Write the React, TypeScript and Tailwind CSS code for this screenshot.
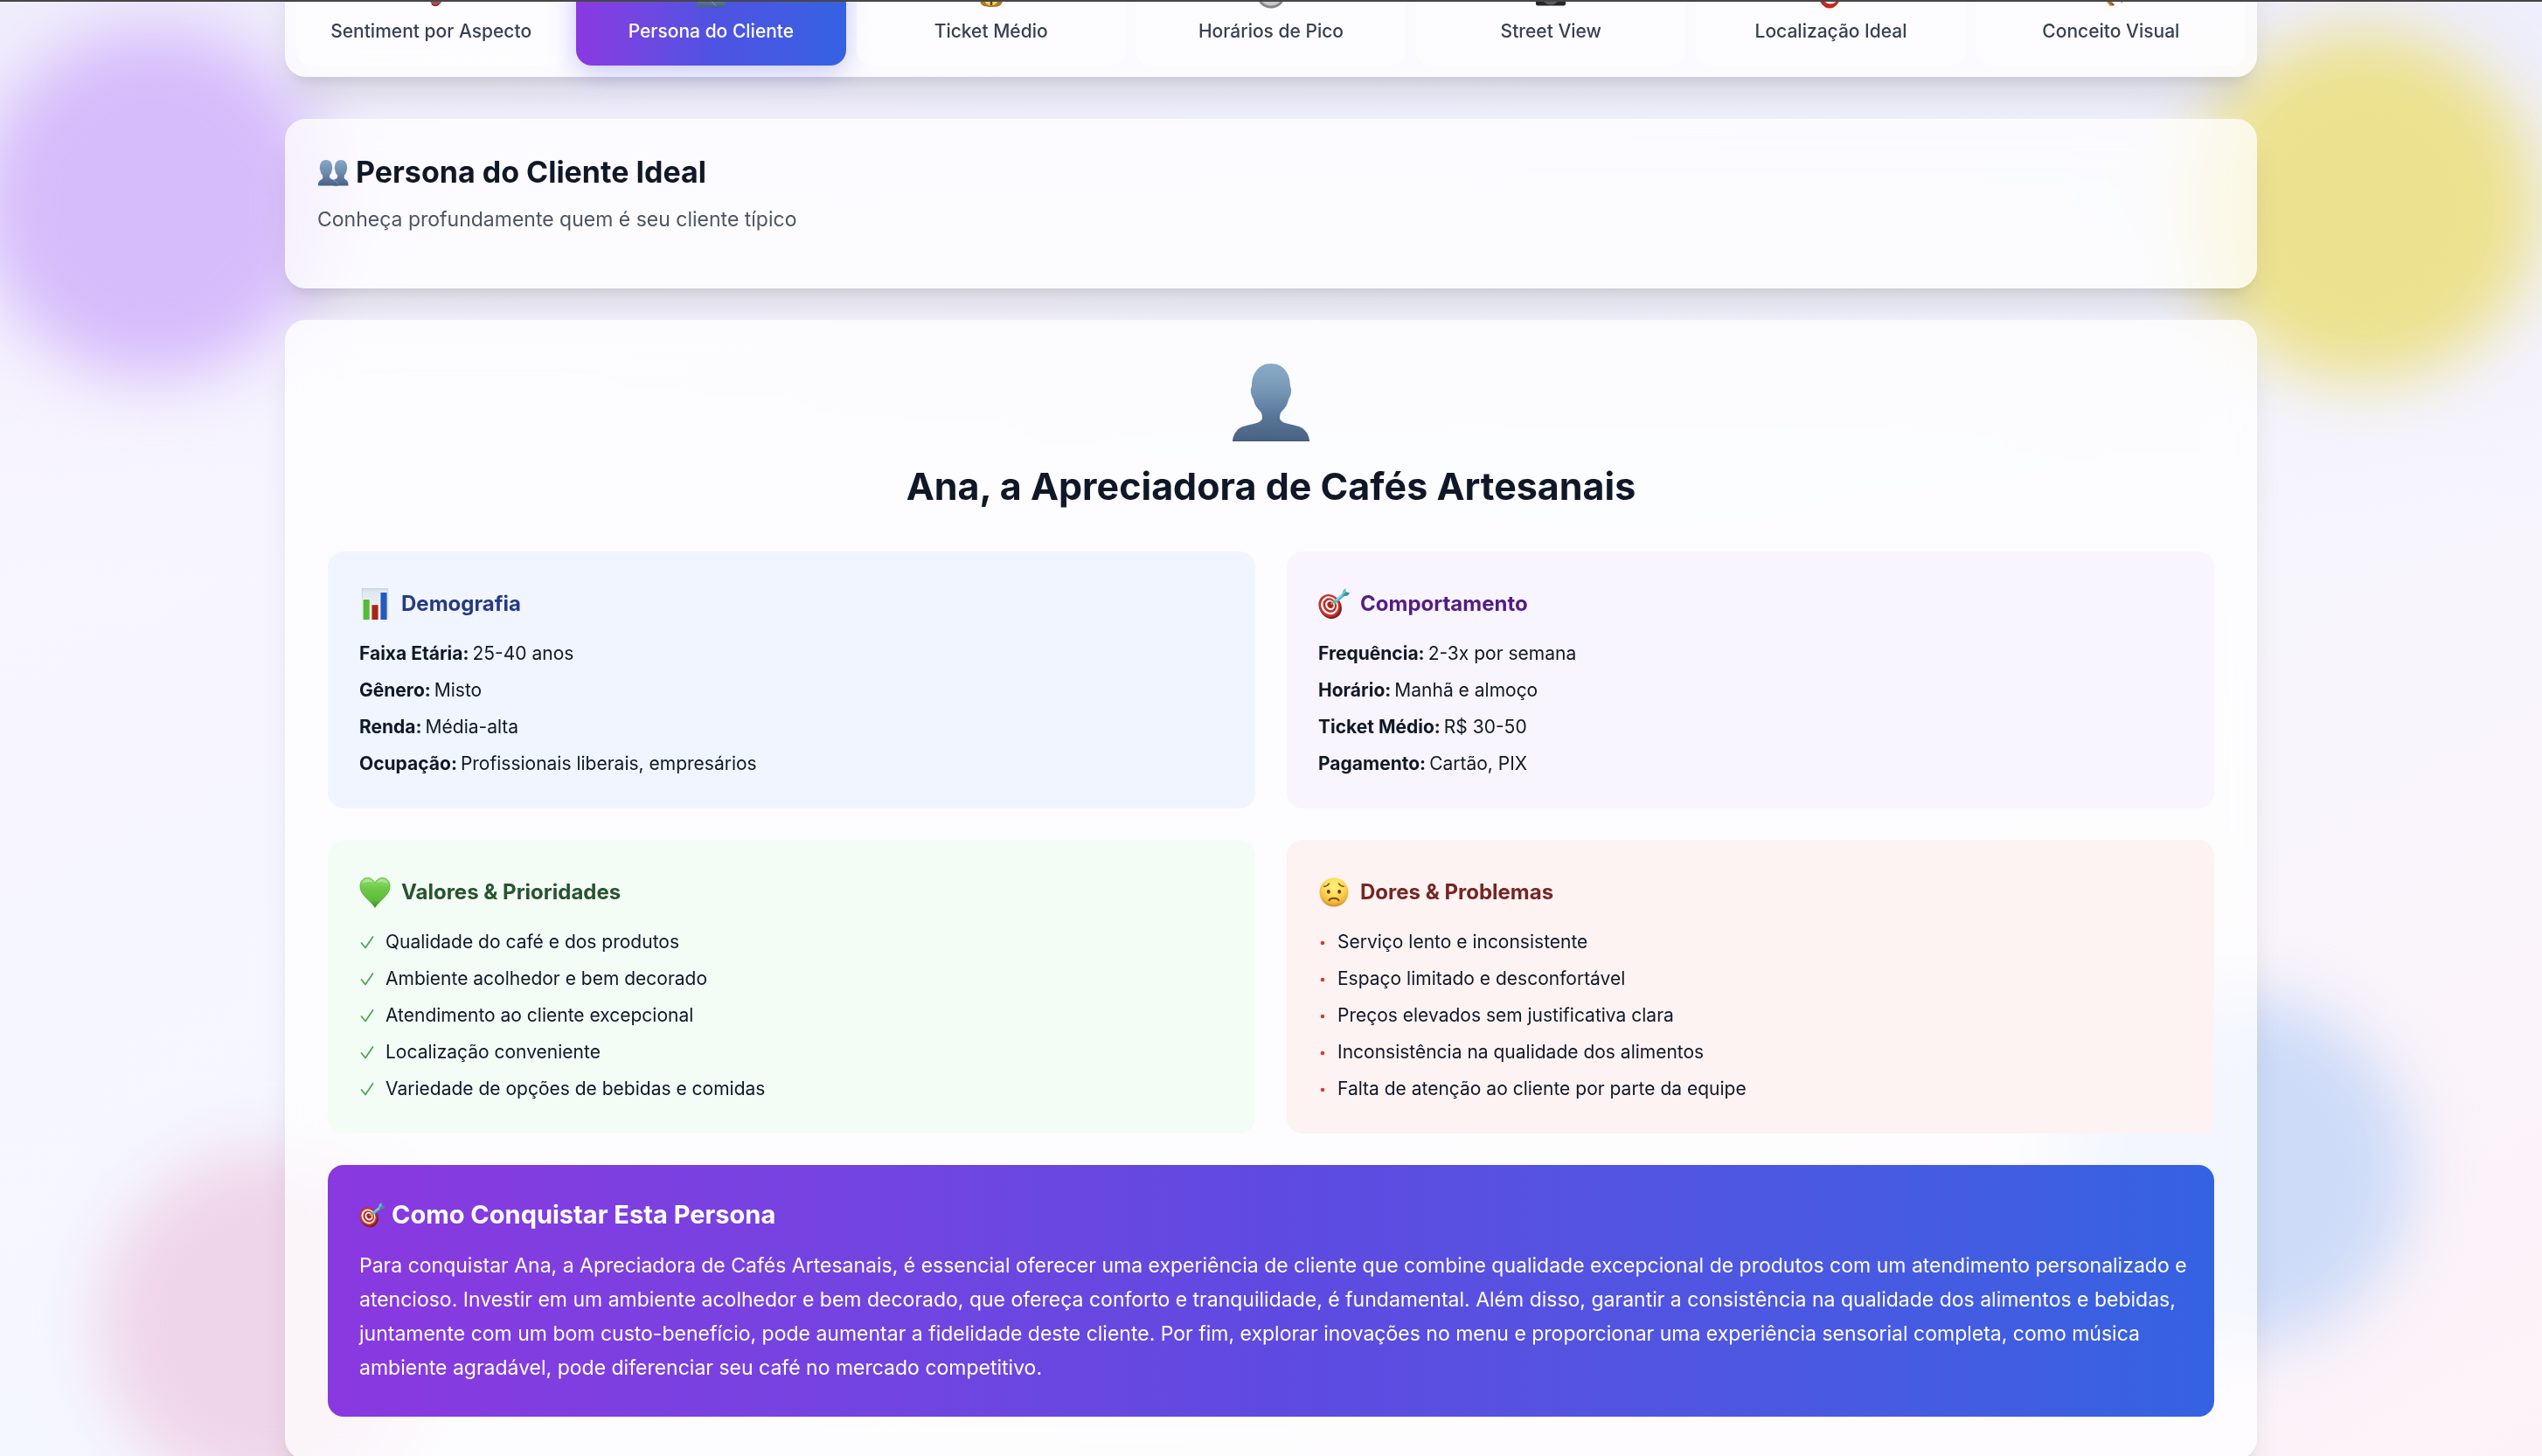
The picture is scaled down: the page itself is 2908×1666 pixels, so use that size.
import { useId, useState } from "react";
import type { ReactNode } from "react";

function PersonIcon({ className }: { className: string }) {
  const id = useId();
  return (
    <svg viewBox="0 0 90 90" className={className} aria-hidden="true">
      <defs>
        <linearGradient id={id} x1="0" y1="0" x2="0" y2="1">
          <stop offset="0" stopColor="#8aabc8" />
          <stop offset="0.35" stopColor="#7797b6" />
          <stop offset="0.65" stopColor="#5a789b" />
          <stop offset="1" stopColor="#486183" />
        </linearGradient>
      </defs>
      <path
        fill={`url(#${id})`}
        d="M45 1C31 1 23 12 23 27C22 29 21.500 31 22 34C22.500 38 24 40 25 42C26 48 29 52 32 55C34.500 57 35 60 35 64C34 67 30 69 25 70C16 72 9 73 5 79C2 83 1 87 1 90H89C89 87 88 83 85 79C81 73 74 72 65 70C60 69 56 67 55 64C55 60 55.500 57 58 55C61 52 64 48 65 42C66 40 67.500 38 68 34C68.500 31 68 29 67 27C67 12 59 1 45 1Z"
      />
      <path fill="none" stroke="#3f577a" strokeWidth="1" d="M1 89.500H89" />
    </svg>
  );
}

function PeopleIcon({ className }: { className: string }) {
  const id = useId();
  return (
    <svg viewBox="0 0 36 36" className={className} aria-hidden="true">
      <defs>
        <linearGradient id={id} x1="0" y1="0" x2="0" y2="1">
          <stop offset="0" stopColor="#86a7c5" />
          <stop offset="0.5" stopColor="#6c8cad" />
          <stop offset="1" stopColor="#486285" />
        </linearGradient>
      </defs>
      <path
        fill={`url(#${id})`}
        d="M27 4C22.500 4 20 7.500 20 12C19.500 13 19.700 14.500 20.300 15.500C20.600 18 21.500 20 23 21.500C23.500 23.500 23 25 21 25.800L17 27.500L19 33.500H35.500C35.500 29.500 34.500 27.500 32.500 26.500C30.500 25.700 30.500 24 31 21.500C32.500 20 33.200 18 33.700 15.500C34.300 14.500 34.500 13 34 12C34 7.500 31.500 4 27 4Z"
      />
      <path
        fill={`url(#${id})`}
        d="M10 4C5.500 4 3 7.500 3 12C2.500 13 2.700 14.500 3.300 15.500C3.600 18 4.500 20 6 21.500C6.500 24 6.500 25.700 4.500 26.500C2 27.500 .800 29.500 .800 33.500H24C23.800 29.500 22 28 19 27C15 25.800 13.700 24.500 14 21.500C15.500 20 16.400 18 16.700 15.500C17.300 14.500 17.500 13 17 12C17 7.500 14.500 4 10 4Z"
      />
      <path fill="none" stroke="#8faac3" strokeWidth=".8" d="M19 27.500C21.500 28.300 22.800 29.500 23.500 31.500" />
    </svg>
  );
}

function ChartIcon({ className }: { className: string }) {
  const id = useId();
  return (
    <svg viewBox="0 0 36 36" className={className} aria-hidden="true">
      <defs>
        <linearGradient id={id} x1="0" y1="0" x2="0" y2="1">
          <stop offset="0" stopColor="#d3dbe3" />
          <stop offset="0.15" stopColor="#e3e9f0" />
          <stop offset="1" stopColor="#e9eff6" />
        </linearGradient>
      </defs>
      <rect x="3" y="0" width="30" height="36" fill={`url(#${id})`} />
      <path fill="none" stroke="#c6d0da" strokeWidth=".7" d="M3 .500H33M3.400 0V36M32.700 0V36" />
      <rect x="3.500" y="12" width="9" height="24" fill="#f6fff4" />
      <rect x="4.500" y="13" width="7.200" height="23" fill="#54b93b" />
      <rect x="13.500" y="18" width="9" height="18" fill="#fff4f2" />
      <rect x="14.400" y="19.200" width="7.200" height="16.800" fill="#ab2318" />
      <rect x="23.400" y="4" width="9" height="32" fill="#f2f6ff" />
      <rect x="24.400" y="5" width="7.200" height="31" fill="#2459bd" />
    </svg>
  );
}

function TargetIcon({ className }: { className: string }) {
  return (
    <svg viewBox="0 0 36 36" className={className} aria-hidden="true">
      <ellipse cx="14" cy="21.500" rx="12.500" ry="14" fill="#7e1d19" transform="rotate(-32 14 21.500)" />
      <ellipse cx="12.800" cy="20" rx="12" ry="13.400" fill="#c9302a" transform="rotate(-32 12.800 20)" />
      <ellipse cx="13" cy="19.800" rx="9.600" ry="10.800" fill="#f7f1ee" transform="rotate(-32 13 19.800)" />
      <ellipse cx="13.300" cy="19.600" rx="7.500" ry="8.500" fill="#bf2a25" transform="rotate(-32 13.300 19.600)" />
      <ellipse cx="13.600" cy="19.400" rx="5.300" ry="6.100" fill="#f7f1ee" transform="rotate(-32 13.600 19.400)" />
      <ellipse cx="13.900" cy="19.200" rx="3.300" ry="3.800" fill="#a8231f" transform="rotate(-32 13.900 19.200)" />
      <path d="M14.500 18.500L20 14" stroke="#c79a2e" strokeWidth="1.800" />
      <path d="M19 15.800L28.500 8" stroke="#55b9c1" strokeWidth="4" strokeLinecap="round" />
      <path d="M20 13.800L28 7.200" stroke="#a3e1e4" strokeWidth="1.200" />
      <path fill="#6cc3ca" d="M26.500 9.500L28.500 2.500L31.500 0L31.800 4.200L36 5.500L33.500 8.500Z" />
      <path fill="#3a8f9a" d="M28 9L31.800 4.200L36 5.500L33.500 8.500Z" />
    </svg>
  );
}

function HeartIcon({ className }: { className: string }) {
  const id = useId();
  return (
    <svg viewBox="0 0 36 36" className={className} aria-hidden="true">
      <defs>
        <linearGradient id={id} x1="0" y1="0" x2="0" y2="1">
          <stop offset="0" stopColor="#8fdc6e" />
          <stop offset="0.4" stopColor="#6cc944" />
          <stop offset="0.75" stopColor="#5fbb3a" />
          <stop offset="1" stopColor="#35861d" />
        </linearGradient>
      </defs>
      <path
        fill={`url(#${id})`}
        stroke="#4ca52f"
        strokeWidth=".7"
        d="M18 35.500C15.500 31 10 27 6 22.500C2.500 18.500 1 15 1 11C1 5.500 4.500 1.500 9.500 1.500C13.500 1.500 16.500 4 18 7.500C19.500 4 22.500 1.500 26.500 1.500C31.500 1.500 35 5.500 35 11C35 15 33.500 18.500 30 22.500C26 27 20.500 31 18 35.500Z"
      />
      <path fill="#c2f0ad" opacity=".65" d="M3.500 8.500C4 4.800 6.500 3 9.500 3C12.500 3 14.800 4.500 16 7.500C12 5.500 7 5.500 3.500 8.500ZM20 7.500C21.200 4.500 23.500 3 26.500 3C29.500 3 32 4.800 32.500 8.500C29 5.500 24 5.500 20 7.500Z" />
    </svg>
  );
}

function WorriedIcon({ className }: { className: string }) {
  const id = useId();
  return (
    <svg viewBox="0 0 36 36" className={className} aria-hidden="true">
      <defs>
        <radialGradient id={id} cx="0.5" cy="0.3" r="0.72">
          <stop offset="0" stopColor="#fff07c" />
          <stop offset="0.45" stopColor="#fbdc58" />
          <stop offset="0.8" stopColor="#f0b53a" />
          <stop offset="1" stopColor="#cc8222" />
        </radialGradient>
      </defs>
      <circle cx="18" cy="18" r="16.500" fill={`url(#${id})`} />
      <g fill="none" stroke="#7a4c13" strokeLinecap="round">
        <path strokeWidth="1.300" d="M6.500 11.300C9 11.200 11.300 9.800 12.600 8M29.500 11.300C27 11.200 24.700 9.800 23.400 8" />
        <path strokeWidth="2" d="M12.500 27.300C14 24 22 24 23.500 27.300" />
      </g>
      <ellipse cx="11.800" cy="17.300" rx="1.900" ry="2.400" fill="#653d10" />
      <ellipse cx="24.200" cy="17.300" rx="1.900" ry="2.400" fill="#653d10" />
    </svg>
  );
}

function MaskIcon({ className }: { className: string }) {
  return (
    <svg viewBox="0 0 36 36" className={className} aria-hidden="true">
      <path fill="#b04a55" d="M14 4H34C34 16 32 32 23 32C17 32 14 20 14 4Z" />
      <path fill="none" stroke="#7d2c37" strokeWidth="1.500" d="M19 29.500C21 32 25 32 27 29.500" />
    </svg>
  );
}

function MoneyIcon({ className }: { className: string }) {
  return (
    <svg viewBox="0 0 36 36" className={className} aria-hidden="true">
      <path fill="#a87a24" d="M14 8L11 2H25L22 8C30 14 33 23 30 29C28 32.500 24 33 18 33C12 33 8 32.500 6 29C3 23 6 14 14 8Z" />
      <circle cx="18" cy="23" r="8.500" fill="#f3cf55" />
      <path stroke="#5c4310" strokeWidth="2.500" d="M18 15V31" />
    </svg>
  );
}

function ClockIcon({ className }: { className: string }) {
  return (
    <svg viewBox="0 0 36 36" className={className} aria-hidden="true">
      <circle cx="18" cy="18" r="16.500" fill="#858585" />
      <circle cx="18" cy="17.500" r="14" fill="#c9c9c9" />
      <path fill="none" stroke="#222" strokeWidth="1.500" d="M18 8V18H25" />
    </svg>
  );
}

function CameraIcon({ className }: { className: string }) {
  return (
    <svg viewBox="0 0 36 36" className={className} aria-hidden="true">
      <rect x="1" y="7" width="34" height="24.500" rx="2" fill="#262626" />
      <circle cx="18" cy="20" r="10.500" fill="#5c5c5c" />
      <circle cx="18" cy="20" r="7" fill="#16181c" />
    </svg>
  );
}

function PinIcon({ className }: { className: string }) {
  return (
    <svg viewBox="0 0 36 36" className={className} aria-hidden="true">
      <ellipse cx="16" cy="20" rx="12" ry="14.500" fill="#c3271f" />
      <circle cx="17" cy="20" r="9.500" fill="#f4eeee" />
    </svg>
  );
}

function SparkIcon({ className }: { className: string }) {
  return (
    <svg viewBox="0 0 36 36" className={className} aria-hidden="true">
      <path fill="#c98f3a" d="M8 12L22 31L17 32L4 16ZM27 12L32 26L30 29L24 14Z" />
      <path fill="#8a5a22" d="M14 26L20 32L22 30Z" />
    </svg>
  );
}

type Icon = (props: { className: string }) => ReactNode;

const tabs: { label: string; icon: Icon }[] = [
  { label: "Sentiment por Aspecto", icon: MaskIcon },
  { label: "Persona do Cliente", icon: PeopleIcon },
  { label: "Ticket Médio", icon: MoneyIcon },
  { label: "Horários de Pico", icon: ClockIcon },
  { label: "Street View", icon: CameraIcon },
  { label: "Localização Ideal", icon: PinIcon },
  { label: "Conceito Visual", icon: SparkIcon },
];

const demographics = [
  ["Faixa Etária:", "25-40 anos"],
  ["Gênero:", "Misto"],
  ["Renda:", "Média-alta"],
  ["Ocupação:", "Profissionais liberais, empresários"],
];

const behaviour = [
  ["Frequência:", "2-3x por semana"],
  ["Horário:", "Manhã e almoço"],
  ["Ticket Médio:", "R$ 30-50"],
  ["Pagamento:", "Cartão, PIX"],
];

const values = [
  "Qualidade do café e dos produtos",
  "Ambiente acolhedor e bem decorado",
  "Atendimento ao cliente excepcional",
  "Localização conveniente",
  "Variedade de opções de bebidas e comidas",
];

const pains = [
  "Serviço lento e inconsistente",
  "Espaço limitado e desconfortável",
  "Preços elevados sem justificativa clara",
  "Inconsistência na qualidade dos alimentos",
  "Falta de atenção ao cliente por parte da equipe",
];

const glass =
  "rounded-3xl border border-white/20 bg-white/75 backdrop-blur-xl shadow-[0_30px_38px_-8px_rgba(0,0,0,0.1),0_12px_15px_-9px_rgba(0,0,0,0.1)]";

function Panel({
  title,
  icon: PanelIcon,
  tone,
  titleTone,
  children,
}: {
  title: string;
  icon: Icon;
  tone: string;
  titleTone: string;
  children: ReactNode;
}) {
  return (
    <section className={`rounded-[18px] p-9 ${tone}`}>
      <div className="mb-[18px] flex h-12 items-center gap-3">
        <PanelIcon className="size-9" />
        <h4 className={`text-[24px] leading-9 font-bold ${titleTone}`}>{title}</h4>
      </div>
      <div className="text-[21px] leading-[30px] text-gray-900">{children}</div>
    </section>
  );
}

function Facts({ rows }: { rows: string[][] }) {
  return (
    <dl className="flex flex-col gap-3">
      {rows.map(([name, value]) => (
        <div key={name} className="flex gap-1">
          <dt className="font-bold">{name}</dt>
          <dd>{value}</dd>
        </div>
      ))}
    </dl>
  );
}

export default function App() {
  const [active, setActive] = useState("Persona do Cliente");

  return (
    <div className="relative h-screen overflow-hidden bg-linear-to-br from-purple-50 via-[#f5f7ff] to-pink-50 font-['Inter',sans-serif] text-gray-900">
      <div className="absolute inset-x-0 top-0 z-20 h-0.5 bg-[#474548]" />
      <div className="absolute inset-0 bg-linear-to-b from-[#ebeafb] to-transparent to-40% opacity-70" />
      <div className="absolute top-8 -left-6 size-[400px] rounded-full bg-[#d6bcfb] blur-[36px]" />
      <div className="absolute top-9 right-1 size-[400px] rounded-full bg-[#ece18e] blur-[36px]" />
      <div className="absolute right-[148px] bottom-[126px] size-[400px] rounded-full bg-[#cddbf8] blur-[36px]" />
      <div className="absolute -bottom-12 left-28 size-[400px] rounded-full bg-[#efd5ea] blur-[36px]" />

      <main className="relative mx-auto -mt-[66px] w-full max-w-[2256px]">
        <nav className={`mb-12 grid grid-cols-7 gap-3 p-3 ${glass}`}>
          {tabs.map(({ label, icon: TabIcon }) => (
            <button
              key={label}
              type="button"
              onClick={() => setActive(label)}
              className={`flex flex-col items-center gap-2.5 rounded-[18px] pt-7 pb-6 text-[21px] leading-[30px] font-medium ${
                label === active
                  ? "bg-linear-to-r from-[#8a38e0] via-[#4f52e2] to-[#3462e2] text-white shadow-[0_8px_32px_rgba(79,82,226,0.3)]"
                  : "bg-white/50 text-gray-700"
              }`}
            >
              <TabIcon className="size-9" />
              {label}
            </button>
          ))}
        </nav>

        <header className={`mb-9 p-9 ${glass}`}>
          <h2 className="mb-3 flex items-center gap-2 text-[34px] leading-[48px] font-bold">
            <PeopleIcon className="size-9" />
            Persona do Cliente Ideal
          </h2>
          <p className="mb-6 text-[23px] leading-9 text-gray-600">
            Conheça profundamente quem é seu cliente típico
          </p>
        </header>

        <article className={`p-12 ${glass}`}>
          <div className="mb-12 flex flex-col items-center gap-6">
            <PersonIcon className="size-[90px]" />
            <h3 className="text-[43px] leading-[54px] font-bold">Ana, a Apreciadora de Cafés Artesanais</h3>
          </div>

          <div className="mb-9 grid grid-cols-2 gap-9">
            <Panel title="Demografia" icon={ChartIcon} tone="bg-[#f0f5ff]" titleTone="text-[#263985]">
              <Facts rows={demographics} />
            </Panel>
            <Panel title="Comportamento" icon={TargetIcon} tone="bg-[#f8f5fe]" titleTone="text-[#521c87]">
              <Facts rows={behaviour} />
            </Panel>
            <Panel title="Valores & Prioridades" icon={HeartIcon} tone="bg-[#f3fdf5]" titleTone="text-[#28532f]">
              <ul className="flex flex-col gap-3">
                {values.map((item) => (
                  <li key={item} className="flex items-center gap-3">
                    <svg viewBox="0 0 18 18" className="size-[18px]" aria-hidden="true">
                      <path
                        d="M2.500 10L7 15.500L15.500 3"
                        fill="none"
                        stroke="#4aa352"
                        strokeWidth="1.700"
                        strokeLinecap="round"
                        strokeLinejoin="round"
                      />
                    </svg>
                    {item}
                  </li>
                ))}
              </ul>
            </Panel>
            <Panel title="Dores & Problemas" icon={WorriedIcon} tone="bg-[#fdf3f2]" titleTone="text-[#752623]">
              <ul className="flex flex-col gap-3">
                {pains.map((item) => (
                  <li key={item} className="flex items-center gap-3">
                    <svg viewBox="0 0 10 10" className="size-2.5" aria-hidden="true">
                      <circle cx="5" cy="6" r="2.300" fill="#d63a35" />
                    </svg>
                    {item}
                  </li>
                ))}
              </ul>
            </Panel>
          </div>

          <section className="rounded-[18px] bg-linear-to-r from-[#8a38e0] via-[#5f4ae1] to-[#3462e2] py-9 pr-6 pl-9 text-white">
            <h3 className="mb-[18px] flex items-center gap-2 text-[29px] leading-[42px] font-bold">
              <TargetIcon className="size-[29px]" />
              Como Conquistar Esta Persona
            </h3>
            <p className="text-[23px] leading-[39px]">
              Para conquistar Ana, a Apreciadora de Cafés Artesanais, é essencial oferecer uma experiência de cliente
              que combine qualidade excepcional de produtos com um atendimento personalizado e atencioso. Investir em um
              ambiente acolhedor e bem decorado, que ofereça conforto e tranquilidade, é fundamental. Além disso,
              garantir a consistência na qualidade dos alimentos e bebidas, juntamente com um bom custo-benefício, pode
              aumentar a fidelidade deste cliente. Por fim, explorar inovações no menu e proporcionar uma experiência
              sensorial completa, como música ambiente agradável, pode diferenciar seu café no mercado competitivo.
            </p>
          </section>
        </article>
      </main>
    </div>
  );
}
